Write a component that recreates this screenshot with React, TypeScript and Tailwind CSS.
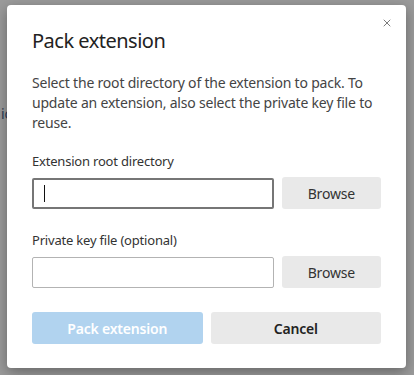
import { X } from 'lucide-react'

const font = { fontFamily: '"Segoe UI", "Noto Sans", sans-serif' }

function FileRow({ label, focused }: { label: string; focused?: boolean }) {
  return (
    <div className="flex flex-col">
      <label className="text-[13px] leading-[18px] tracking-[-0.2px] text-[#333]">{label}</label>
      <div className="mt-[7px] flex items-center gap-[8px]">
        <div
          className={
            focused
              ? 'flex h-[31px] w-[243px] items-center rounded-[2px] border-2 border-[#767676] bg-white pl-[10px]'
              : 'flex h-[31px] w-[243px] items-center rounded-[2px] border border-[#b3b3b3] bg-white pl-[11px]'
          }
        >
          {focused && <span className="block h-[17px] w-px bg-[#111]" />}
        </div>
        <button className="h-[32px] w-[100px] rounded-[3px] bg-[#e9e9e9] text-[14px] tracking-[-0.2px] text-[#333]">
          Browse
        </button>
      </div>
    </div>
  )
}

export default function App() {
  return (
    <div className="relative h-[375px] w-[414px] overflow-hidden bg-[#9b9b9b]" style={font}>
      <span className="absolute left-[1px] top-[103px] text-[14px] text-[#2b3a55]">ic</span>

      <div className="relative pl-[7px] pt-[5px]">
        <div className="relative flex h-[363px] w-[399px] flex-col rounded-[4px] bg-white px-[25px] pt-[22px] shadow-[0_4px_14px_rgba(0,0,0,0.35)]">
          <button className="absolute right-[9px] top-[8px] flex h-[20px] w-[20px] items-center justify-center text-[#333]">
            <X size={12} strokeWidth={1.3} />
          </button>

          <h1 className="text-[20px] leading-[28px] tracking-[-0.5px] text-[#222]">Pack extension</h1>

          <p className="mt-[18px] text-[14px] leading-[20px] tracking-[-0.2px] text-[#444]">
            Select the root directory of the extension to pack. To update an extension, also select the private key file to reuse.
          </p>

          <div className="mt-[19px] flex flex-col gap-[22px]">
            <FileRow label="Extension root directory" focused />
            <FileRow label="Private key file (optional)" />
          </div>

          <div className="mt-[24px] flex gap-[8px]">
            <button className="h-[32px] w-[172px] rounded-[3px] bg-[#b1d3ef] text-[14px] font-semibold tracking-[-0.2px] text-white">
              Pack extension
            </button>
            <button className="h-[32px] w-[172px] rounded-[3px] bg-[#e9e9e9] text-[14px] font-semibold tracking-[-0.2px] text-[#222]">
              Cancel
            </button>
          </div>
        </div>
      </div>
    </div>
  )
}
